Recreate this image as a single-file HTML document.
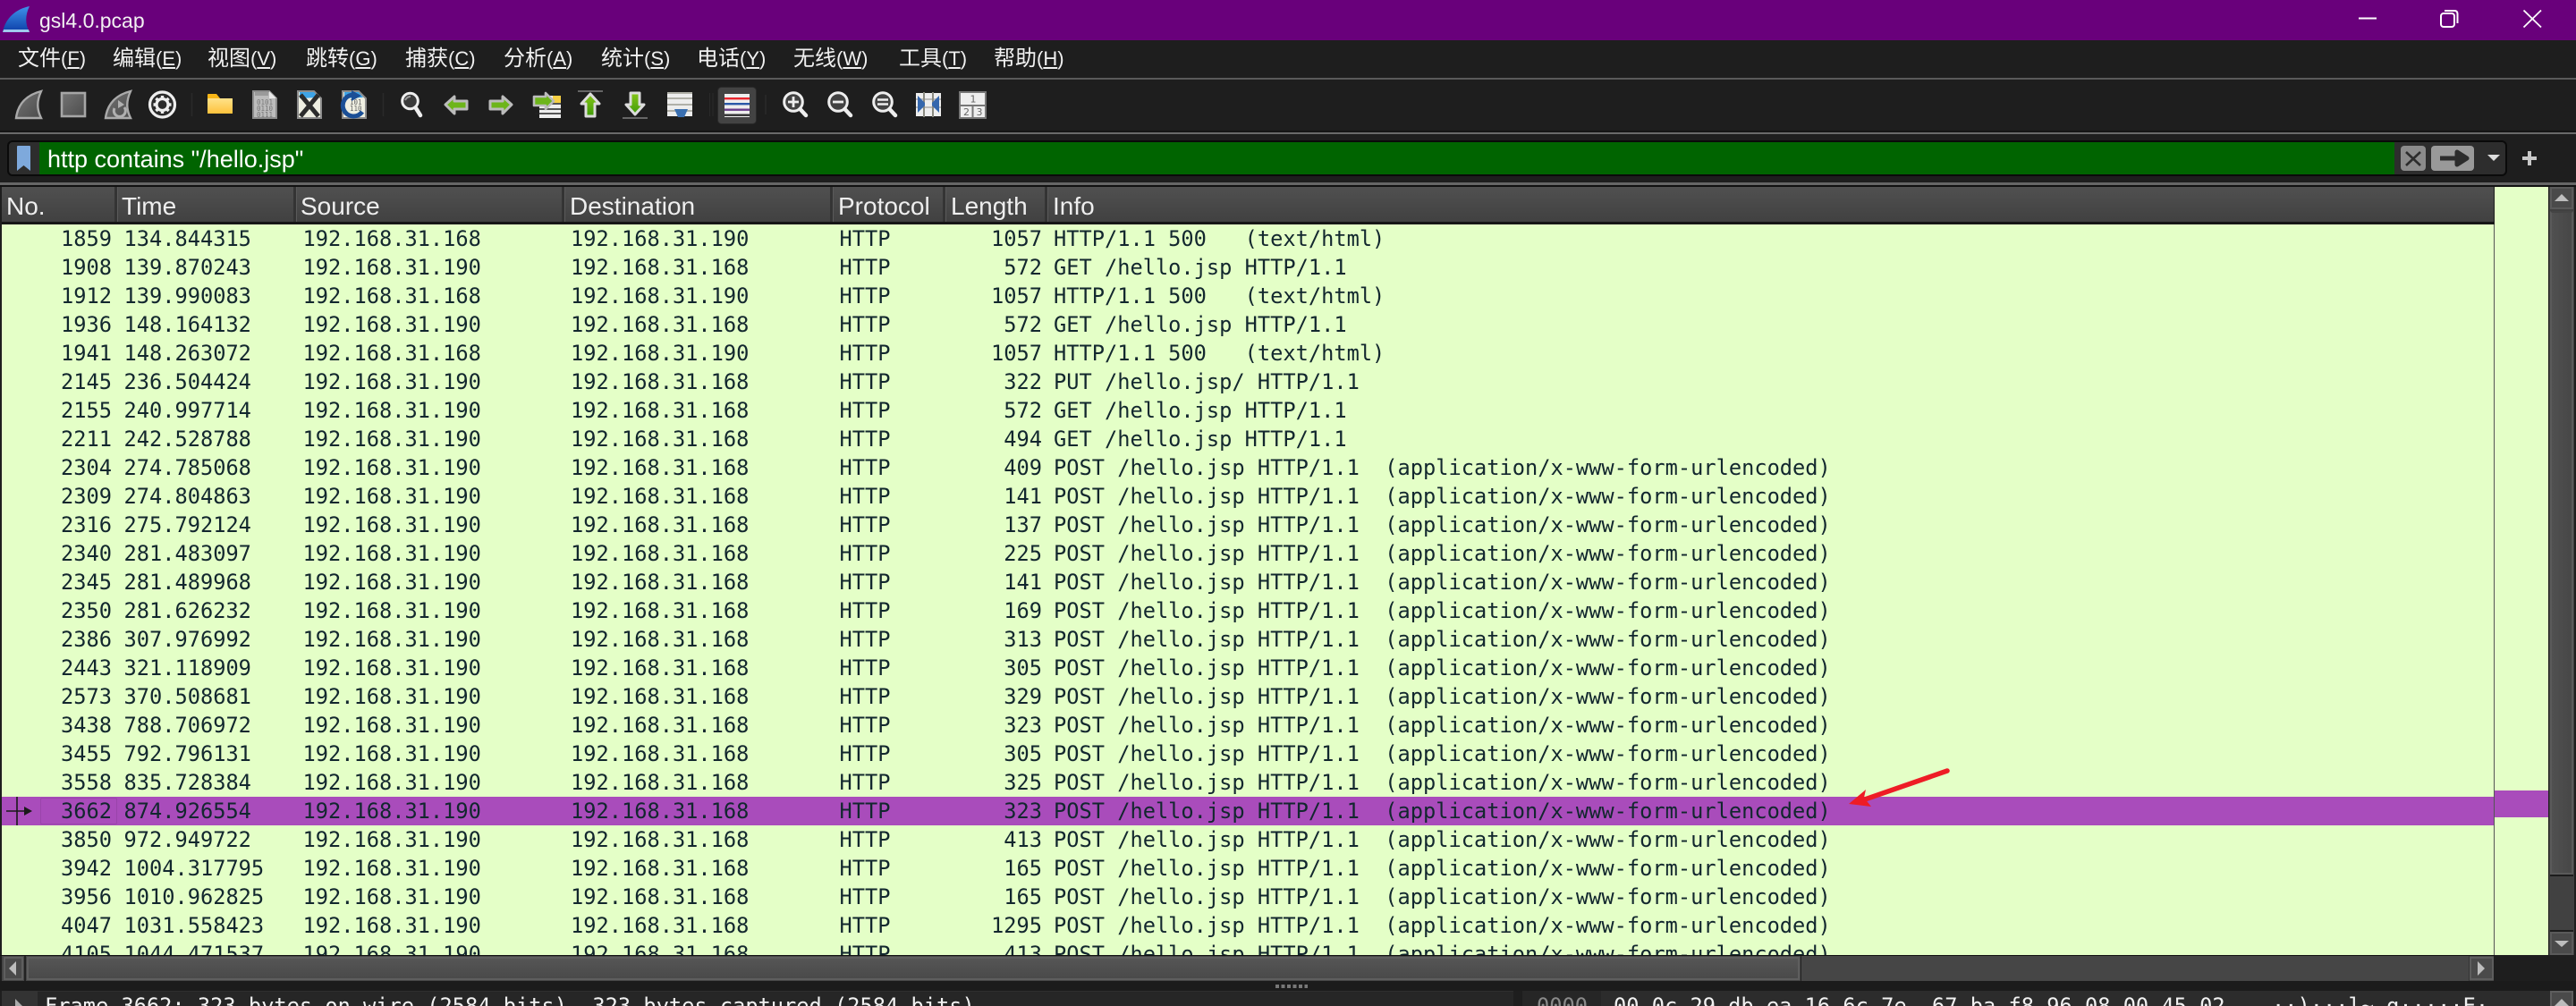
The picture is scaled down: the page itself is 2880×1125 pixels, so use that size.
<!DOCTYPE html>
<html><head><meta charset="utf-8"><style>
html,body{margin:0;padding:0;width:2880px;height:1125px;overflow:hidden;background:#1e1e1e}
div,pre,span{position:absolute;margin:0;padding:0}
.m{top:49px;height:34px;line-height:34px;font:24px/34px "Liberation Sans","Noto Sans CJK SC",sans-serif;color:#f0f0f0;white-space:nowrap}
.m u{font-size:22px;text-underline-offset:2px}
.m b{font-weight:normal;font-size:22px}
pre{font:23.67px/32px "DejaVu Sans Mono",monospace;color:#12272e;top:0}
.h{top:210px;height:39px;font:28px/41px "Liberation Sans",sans-serif;color:#eee;white-space:nowrap}
.s{top:209px;height:39px;width:3px;background:#343434;border-right:1px solid #5a5a5a}
</style></head><body>
<div style="left:0;top:0;width:2880px;height:1125px;overflow:hidden;contain:paint">

<div style="left:0;top:0;width:2880px;height:45px;background:#69007b"></div>
<div style="left:44px;top:8px;font:23px/30px 'Liberation Sans',sans-serif;color:#f2f2f2">gsl4.0.pcap</div>

<div style="left:0;top:87px;width:2880px;height:2px;background:#5a5a5a"></div>
<div style="left:0;top:146px;width:2880px;height:2px;background:#151515"></div>
<div style="left:0;top:148px;width:2880px;height:2px;background:#6a6a6a"></div>

<div class="m" style="left:20px">文件<b>(</b><b><u>F</u></b><b>)</b></div>
<div class="m" style="left:126px">编辑<b>(</b><b><u>E</u></b><b>)</b></div>
<div class="m" style="left:232px">视图<b>(</b><b><u>V</u></b><b>)</b></div>
<div class="m" style="left:342px">跳转<b>(</b><b><u>G</u></b><b>)</b></div>
<div class="m" style="left:453px">捕获<b>(</b><b><u>C</u></b><b>)</b></div>
<div class="m" style="left:563px">分析<b>(</b><b><u>A</u></b><b>)</b></div>
<div class="m" style="left:672px">统计<b>(</b><b><u>S</u></b><b>)</b></div>
<div class="m" style="left:779px">电话<b>(</b><b><u>Y</u></b><b>)</b></div>
<div class="m" style="left:887px">无线<b>(</b><b><u>W</u></b><b>)</b></div>
<div class="m" style="left:1005px">工具<b>(</b><b><u>T</u></b><b>)</b></div>
<div class="m" style="left:1111px">帮助<b>(</b><b><u>H</u></b><b>)</b></div>

<!-- filter bar -->
<div style="left:8px;top:157px;width:2795px;height:40px;box-sizing:border-box;background:#2d2d2d;border:2px solid #0a0a0a;border-radius:6px"></div>
<div style="left:44px;top:159px;width:2633px;height:36px;background:#006400"></div>
<div style="left:53px;top:160px;font:27px/37px 'Liberation Sans',sans-serif;color:#fff;white-space:nowrap">http contains "/hello.jsp"</div>
<div style="left:0;top:204px;width:2880px;height:3px;background:#666"></div>
<div style="left:0;top:207px;width:2880px;height:2px;background:#111"></div>

<!-- header -->
<div style="left:2px;top:209px;width:2786px;height:39px;background:linear-gradient(#505050,#414141)"></div>
<div style="left:2px;top:248px;width:2786px;height:3px;background:#161616"></div>
<div class="s" style="left:128px"></div><div class="s" style="left:328px"></div><div class="s" style="left:628px"></div><div class="s" style="left:928px"></div><div class="s" style="left:1054px"></div><div class="s" style="left:1168px"></div>
<div class="h" style="left:7px">No.</div>
<div class="h" style="left:136px">Time</div>
<div class="h" style="left:336px">Source</div>
<div class="h" style="left:637px">Destination</div>
<div class="h" style="left:937px">Protocol</div>
<div class="h" style="left:1063px">Length</div>
<div class="h" style="left:1177px">Info</div>

<!-- table -->
<div style="left:2px;top:251px;width:2786px;height:818px;background:#e4ffc7;overflow:hidden">
<div style="left:0;top:640px;width:2786px;height:32px;background:#a94cbb"></div>
<div style="left:43px;top:641px;width:86px;height:30px;box-sizing:border-box;border:1px solid #9a45ab;border-radius:2px"></div>
<pre style="left:0;width:123px;text-align:right">1859
1908
1912
1936
1941
2145
2155
2211
2304
2309
2316
2340
2345
2350
2386
2443
2573
3438
3455
3558
3662
3850
3942
3956
4047
4105</pre>
<pre style="left:136.5px">134.844315
139.870243
139.990083
148.164132
148.263072
236.504424
240.997714
242.528788
274.785068
274.804863
275.792124
281.483097
281.489968
281.626232
307.976992
321.118909
370.508681
788.706972
792.796131
835.728384
874.926554
972.949722
1004.317795
1010.962825
1031.558423
1044.471537</pre>
<pre style="left:336.5px">192.168.31.168
192.168.31.190
192.168.31.168
192.168.31.190
192.168.31.168
192.168.31.190
192.168.31.190
192.168.31.190
192.168.31.190
192.168.31.190
192.168.31.190
192.168.31.190
192.168.31.190
192.168.31.190
192.168.31.190
192.168.31.190
192.168.31.190
192.168.31.190
192.168.31.190
192.168.31.190
192.168.31.190
192.168.31.190
192.168.31.190
192.168.31.190
192.168.31.190
192.168.31.190</pre>
<pre style="left:636px">192.168.31.190
192.168.31.168
192.168.31.190
192.168.31.168
192.168.31.190
192.168.31.168
192.168.31.168
192.168.31.168
192.168.31.168
192.168.31.168
192.168.31.168
192.168.31.168
192.168.31.168
192.168.31.168
192.168.31.168
192.168.31.168
192.168.31.168
192.168.31.168
192.168.31.168
192.168.31.168
192.168.31.168
192.168.31.168
192.168.31.168
192.168.31.168
192.168.31.168
192.168.31.168</pre>
<pre style="left:936.5px">HTTP
HTTP
HTTP
HTTP
HTTP
HTTP
HTTP
HTTP
HTTP
HTTP
HTTP
HTTP
HTTP
HTTP
HTTP
HTTP
HTTP
HTTP
HTTP
HTTP
HTTP
HTTP
HTTP
HTTP
HTTP
HTTP</pre>
<pre style="left:1000px;width:163px;text-align:right">1057
572
1057
572
1057
322
572
494
409
141
137
225
141
169
313
305
329
323
305
325
323
413
165
165
1295
413</pre>
<pre style="left:1176px">HTTP/1.1 500   (text/html)
GET /hello.jsp HTTP/1.1
HTTP/1.1 500   (text/html)
GET /hello.jsp HTTP/1.1
HTTP/1.1 500   (text/html)
PUT /hello.jsp/ HTTP/1.1
GET /hello.jsp HTTP/1.1
GET /hello.jsp HTTP/1.1
POST /hello.jsp HTTP/1.1  (application/x-www-form-urlencoded)
POST /hello.jsp HTTP/1.1  (application/x-www-form-urlencoded)
POST /hello.jsp HTTP/1.1  (application/x-www-form-urlencoded)
POST /hello.jsp HTTP/1.1  (application/x-www-form-urlencoded)
POST /hello.jsp HTTP/1.1  (application/x-www-form-urlencoded)
POST /hello.jsp HTTP/1.1  (application/x-www-form-urlencoded)
POST /hello.jsp HTTP/1.1  (application/x-www-form-urlencoded)
POST /hello.jsp HTTP/1.1  (application/x-www-form-urlencoded)
POST /hello.jsp HTTP/1.1  (application/x-www-form-urlencoded)
POST /hello.jsp HTTP/1.1  (application/x-www-form-urlencoded)
POST /hello.jsp HTTP/1.1  (application/x-www-form-urlencoded)
POST /hello.jsp HTTP/1.1  (application/x-www-form-urlencoded)
POST /hello.jsp HTTP/1.1  (application/x-www-form-urlencoded)
POST /hello.jsp HTTP/1.1  (application/x-www-form-urlencoded)
POST /hello.jsp HTTP/1.1  (application/x-www-form-urlencoded)
POST /hello.jsp HTTP/1.1  (application/x-www-form-urlencoded)
POST /hello.jsp HTTP/1.1  (application/x-www-form-urlencoded)
POST /hello.jsp HTTP/1.1  (application/x-www-form-urlencoded)</pre>
</div>
<div style="left:2788px;top:251px;width:1px;height:818px;background:#555"></div>
<div style="left:2789px;top:209px;width:60px;height:859px;background:#e4ffc7"></div>
<div style="left:2789px;top:884px;width:60px;height:30px;background:#a94cbb"></div>

<!-- vertical scrollbar -->
<div style="left:2850px;top:209px;width:28px;height:859px;background:#414141"></div>
<div style="left:2851px;top:209px;width:26px;height:25px;box-sizing:border-box;background:#4a4a4a;border:2px solid #5a5a5a"></div>
<div style="left:2851px;top:236px;width:26px;height:742px;box-sizing:border-box;background:linear-gradient(90deg,#505050,#474747);border:2px solid #5a5a5a;border-top-color:#444"></div>
<div style="left:2851px;top:978px;width:26px;height:2px;background:#1c1c1c"></div>
<div style="left:2851px;top:1040px;width:26px;height:2px;background:#1c1c1c"></div>
<div style="left:2851px;top:1042px;width:26px;height:26px;box-sizing:border-box;background:#4a4a4a;border:2px solid #5a5a5a"></div>

<!-- horizontal scrollbar -->
<div style="left:0;top:1068px;width:2789px;height:1px;background:#111"></div>
<div style="left:2px;top:1069px;width:2786px;height:28px;background:#464646"></div>
<div style="left:4px;top:1070px;width:22px;height:26px;box-sizing:border-box;background:#4a4a4a;border:2px solid #5e5e5e"></div>
<div style="left:27px;top:1069px;width:2px;height:28px;background:#222"></div>
<div style="left:30px;top:1070px;width:1982px;height:26px;box-sizing:border-box;background:linear-gradient(#555,#4a4a4a);border:2px solid #5e5e5e"></div>
<div style="left:2013px;top:1069px;width:1px;height:28px;background:#222"></div>
<div style="left:2760px;top:1069px;width:1px;height:28px;background:#333"></div>
<div style="left:2761px;top:1070px;width:27px;height:26px;box-sizing:border-box;background:#4a4a4a;border:2px solid #5e5e5e"></div>

<!-- bottom panes -->
<div style="left:0;top:1097px;width:2880px;height:11px;background:#1b1b1b"></div>
<div style="left:2px;top:1108px;width:1690px;height:17px;background:#262626;border-top:1px solid #2e2e2e"></div>
<div style="left:2px;top:1108px;width:40px;height:17px;background:#333"></div>
<div style="left:1702px;top:1108px;width:88px;height:17px;background:#262626"></div>
<div style="left:1790px;top:1108px;width:1061px;height:17px;background:#2c2c2c"></div>
<div style="left:2851px;top:1108px;width:26px;height:17px;box-sizing:border-box;background:#4a4a4a;border:2px solid #5e5e5e;border-bottom:0"></div>
<div style="left:0;top:1108px;width:2880px;height:17px;overflow:hidden">
<pre style="left:50px;top:1px;color:#f2f2f2;white-space:pre">Frame 3662: 323 bytes on wire (2584 bits), 323 bytes captured (2584 bits)</pre>
<pre style="left:1718px;top:1px;color:#8a8a8a">0000</pre>
<pre style="left:1804px;top:1px;color:#f2f2f2">00 0c 29 db ea 16 6c 7e  67 ba f8 96 08 00 45 02</pre>
<pre style="left:2540px;top:1px;color:#f2f2f2">··)···l~ g·····E·</pre>
</div>

<svg width="2880" height="1125" viewBox="0 0 2880 1125" style="position:absolute;left:0;top:0;display:block">
<defs>
<linearGradient id="gf" x1="0" y1="0" x2="1" y2="1"><stop offset="0" stop-color="#747474"/><stop offset="1" stop-color="#4c4c4c"/></linearGradient>
<linearGradient id="bl" x1="0" y1="0" x2="0" y2="1"><stop offset="0" stop-color="#3f93ea"/><stop offset="1" stop-color="#0c3ea8"/></linearGradient>
<linearGradient id="fo" x1="0" y1="0" x2="0" y2="1"><stop offset="0" stop-color="#ffe28a"/><stop offset="1" stop-color="#fdc23c"/></linearGradient>
<linearGradient id="gr" x1="0" y1="0" x2="0" y2="1"><stop offset="0" stop-color="#86c61a"/><stop offset="1" stop-color="#3f9a08"/></linearGradient>
</defs>
<!-- app icon -->
<path d="M3 36 C6 20 18 10 33 7 C28 17 28 27 33 36 Z" fill="url(#bl)"/><path d="M4 33 L32 33 L33 36 L3 36 Z" fill="#9fc9ee"/>
<!-- window controls -->
<path d="M2637 20.5 H2657" stroke="#fff" stroke-width="2"/>
<rect x="2729" y="15" width="15" height="15" rx="3" fill="none" stroke="#fff" stroke-width="2"/>
<path d="M2733 12 H2744 Q2747.5 12 2747.5 15.5 V26" fill="none" stroke="#fff" stroke-width="2"/>
<path d="M2821.5 11.5 L2841 30.5 M2841 11.5 L2821.5 30.5" stroke="#fff" stroke-width="1.8"/>
<!-- capture icons -->
<path d="M18 132 C20 116 30 106 46 102 C41 113 41 122 46 132 Z" fill="url(#gf)" stroke="#aaa" stroke-width="2.4"/>
<rect x="69" y="104" width="26" height="26" fill="url(#gf)" stroke="#a6a6a6" stroke-width="2.6"/>
<path d="M118 132 C120 116 130 106 146 102 C141 113 141 122 146 132 Z" fill="url(#gf)" stroke="#aaa" stroke-width="2.4"/>
<path d="M128 121 A6.5 6.5 0 1 0 139 120" fill="none" stroke="#b0b0b0" stroke-width="3"/><path d="M132 112 L139 117 L132 121 Z" fill="#b0b0b0"/>
<circle cx="181.5" cy="117" r="14" fill="#2a2a2a" stroke="#eee" stroke-width="3.2"/>
<circle cx="181.5" cy="117" r="6.5" fill="none" stroke="#eee" stroke-width="3.2"/>
<path d="M181.5 107 V110 M181.5 124 V127 M171.5 117 H174.5 M188.5 117 H191.5 M174.4 109.9 L176.5 112 M186.5 122 L188.6 124.1 M174.4 124.1 L176.5 122 M186.5 112 L188.6 109.9" stroke="#eee" stroke-width="3.4"/>
<path d="M214.5 104 V130" stroke="#2a2a2a" stroke-width="1.5"/>
<!-- file icons -->
<path d="M232 106 Q232 105 233 105 H242 L246 110 H260 V127 H232 Z" fill="#f8b616"/><rect x="232" y="110" width="28" height="17" rx="1" fill="url(#fo)"/>
<path d="M283 102 H301 L309 110 V132 H283 Z" fill="#bcbcbc" stroke="#8c8c8c" stroke-width="2"/><path d="M301 102 V110 H309 Z" fill="#e8e8e8"/><path d="M285 103 H300 V107 H285 Z" fill="#9a9a9a"/>
<g font-family="'DejaVu Sans Mono',monospace" font-size="7.5" fill="#777"><text x="287" y="117">0101</text><text x="287" y="124">0110</text><text x="287" y="131">0111</text></g>
<path d="M333 102 H351 L359 110 V132 H333 Z" fill="#efefe2" stroke="#8c8c8c" stroke-width="2"/><path d="M335 103 H351 L356 109 L335 110 Z" fill="#3ea4e6"/>
<path d="M336 106 L356 130 M356 106 L336 130" stroke="#2c2c2c" stroke-width="5"/>
<path d="M383 102 H401 L409 110 V132 H383 Z" fill="#efefe2" stroke="#8c8c8c" stroke-width="2"/><path d="M385 103 H401 L406 109 L385 110 Z" fill="#3ea4e6"/>
<g font-family="'DejaVu Sans Mono',monospace" font-size="7.5" fill="#666"><text x="391" y="117">101</text><text x="391" y="124">110</text></g>
<path d="M405 125 A12 12 0 1 1 396 106" fill="none" stroke="#1b4f96" stroke-width="5"/><path d="M393 101 L404 107 L393 113 Z" fill="#1b4f96"/>
<path d="M428.5 104 V130" stroke="#2a2a2a" stroke-width="1.5"/>
<!-- search -->
<circle cx="458.5" cy="113" r="8.8" fill="#3a3a3a" stroke="#eee" stroke-width="3"/><path d="M465 121 L470 129" stroke="#eee" stroke-width="4.5" stroke-linecap="round"/><path d="M453 112 Q455 108 459 108" stroke="#999" stroke-width="2" fill="none"/>
<!-- arrows -->
<path d="M498 117 L508 108 V113 H522 V122 H508 V127 Z" fill="#6db51a" stroke="#bcbcbc" stroke-width="3" stroke-linejoin="round"/>
<path d="M572 117 L562 108 V113 H548 V122 H562 V127 Z" fill="#6db51a" stroke="#bcbcbc" stroke-width="3" stroke-linejoin="round"/>
<path d="M603 107 H627 V132 H603 Z" fill="#eee"/><path d="M618 107 H627 V115 H618 Z" fill="#f7d044"/><path d="M598 116 H627 M598 122 H627 M598 127 H627" stroke="#222" stroke-width="1.6"/>
<path d="M619 113 L610 104 V108 H597 V118 H610 V122 Z" fill="#6db51a" stroke="#bcbcbc" stroke-width="2.6" stroke-linejoin="round"/>
<path d="M646 102 H674" stroke="#666" stroke-width="2"/>
<path d="M660 105 L670 116 H665 V130 H655 V116 H650 Z" fill="url(#gr)" stroke="#dcdcdc" stroke-width="3" stroke-linejoin="round"/>
<path d="M696 132 H724" stroke="#666" stroke-width="2"/>
<path d="M710 128 L700 117 H705 V104 H715 V117 H720 Z" fill="url(#gr)" stroke="#dcdcdc" stroke-width="3" stroke-linejoin="round"/>
<rect x="746" y="104" width="28" height="26" fill="#ededed"/><path d="M746 104 H774 M746 110 H774 M746 117 H774 M746 124 H774" stroke="#b0b0a8" stroke-width="2"/>
<path d="M754 122 H769 L765 131 H758 Z" fill="#3a6fb0"/>
<path d="M793.5 104 V130 M797 104 V130" stroke="#2a2a2a" stroke-width="1"/><path d="M856 106 V128" stroke="#2a2a2a" stroke-width="1.5"/>
<!-- colorize -->
<rect x="802.5" y="97.5" width="43" height="41" rx="4" fill="#434343" stroke="#2a2a2a"/>
<rect x="810" y="105" width="28" height="26" fill="#eee"/><rect x="810" y="109" width="28" height="2.4" fill="#e8262e"/><rect x="810" y="115" width="28" height="2.4" fill="#2a58a8"/><rect x="810" y="121.5" width="28" height="2.4" fill="#6a3b8a"/><rect x="810" y="127.5" width="28" height="2.4" fill="#303030"/>
<!-- zoom -->
<g><circle cx="887" cy="114" r="10.3" fill="#424242" stroke="#eee" stroke-width="3"/><path d="M894.5 122 L901 129" stroke="#eee" stroke-width="4.5" stroke-linecap="round"/><path d="M881 114 H893 M887 108 V120" stroke="#eee" stroke-width="2.8"/></g>
<g><circle cx="937" cy="114" r="10.3" fill="#424242" stroke="#eee" stroke-width="3"/><path d="M944.5 122 L951 129" stroke="#eee" stroke-width="4.5" stroke-linecap="round"/><path d="M931 114 H943" stroke="#eee" stroke-width="2.8"/></g>
<g><circle cx="987" cy="114" r="10.3" fill="#424242" stroke="#eee" stroke-width="3"/><path d="M994.5 122 L1001 129" stroke="#eee" stroke-width="4.5" stroke-linecap="round"/><path d="M981 111.5 H993 M981 116.5 H993" stroke="#eee" stroke-width="2.4"/></g>
<!-- resize -->
<rect x="1024" y="104" width="28" height="26" fill="#eee"/><path d="M1024 111 H1052 M1024 120 H1052" stroke="#bbb" stroke-width="2"/>
<path d="M1033 103 V131 M1043 103 V131" stroke="#8a8a80" stroke-width="2"/>
<path d="M1026 107 L1034 115 V118 L1026 126 Z M1050 107 L1042 115 V118 L1050 126 Z" fill="#3567ad"/>
<!-- layout -->
<rect x="1073" y="103" width="29" height="29" fill="#eee" stroke="#777" stroke-width="2"/><path d="M1073 118 H1102 M1087.5 118 V132" stroke="#777" stroke-width="2"/>
<g font-family="'DejaVu Sans',sans-serif" font-size="11" fill="#666" text-anchor="middle"><text x="1088" y="114.500">1</text><text x="1080.500" y="129">2</text><text x="1095" y="129">3</text></g>
<!-- filter buttons -->
<path d="M19 164 Q19 163 20 163 H33 Q34 163 34 164 V191 L26.500 185 L19 191 Z" fill="#7ea9dc"/>
<rect x="2684" y="163" width="28" height="28" rx="4" fill="#8b8b8b"/><path d="M2690 170 L2706 185 M2706 170 L2690 185" stroke="#2c2c2c" stroke-width="2.600"/>
<rect x="2718" y="163" width="48" height="28" rx="4" fill="#999"/><path d="M2728 177 H2747 M2747 170 L2758 177 L2747 184 Z" fill="#2c2c2c" stroke="#2c2c2c" stroke-width="5" stroke-linejoin="round"/>
<path d="M2781 173 H2795 L2788 180 Z" fill="#ddd"/>
<path d="M2820 177 H2836 M2828 169 V185" stroke="#c8c8c8" stroke-width="4"/>
<!-- scroll arrows -->
<path d="M2856 225 H2872 L2864 217 Z" fill="#bdbdbd"/><path d="M2856 1052 H2872 L2864 1059 Z" fill="#bdbdbd"/>
<path d="M2856 1125 L2864 1117 L2872 1125 Z" fill="#bdbdbd"/>
<path d="M18 1075 V1091 L10 1083 Z" fill="#bdbdbd"/><path d="M2770 1075 V1091 L2778 1083 Z" fill="#bdbdbd"/>
<path d="M17 1117 V1125 H25 Z" fill="#aaa"/>
<!-- selected row marker -->
<path d="M19 891 V923 M7 907 H28" stroke="#1a1a1a" stroke-width="1.600"/><path d="M27 902 L36 907 L27 912 Z" fill="#1a1a1a"/>
<!-- grip -->
<path d="M1426 1103 H1462" stroke="#777" stroke-width="4" stroke-dasharray="4 2.500"/>
<!-- red annotation arrow -->
<path d="M2177 862 L2082 895" stroke="#ee1c25" stroke-width="5.500" stroke-linecap="round"/><path d="M2067 899 L2086 883 L2084 892 L2092 902 Z" fill="#ee1c25"/>
</svg>
</div>
</body></html>
